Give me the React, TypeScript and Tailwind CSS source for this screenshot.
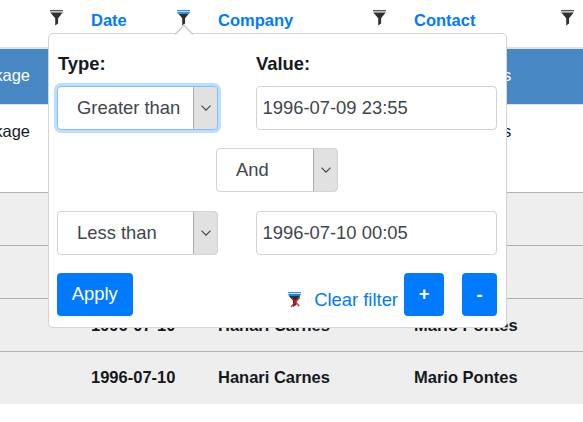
import React from "react";

function Funnel({ active = false }: { active?: boolean }) {
  return (
    <svg width="13" height="16" viewBox="0 0 13 16" className="block shrink-0">
      <rect x="0" y="0" width="13" height="1.4" fill={active ? "#2b8fe6" : "#555"} />
      <rect x="0" y="1.4" width="13" height="0.9" fill={active ? "#c4e4fb" : "#c8c8c8"} />
      <path d="M0.3 2.5H12.7L8.1 8.2V13.6L5.2 15.6V8.2Z" fill="#303030" />
      {active && <path d="M0 2.3H13L11.8 4H1.2Z" fill="#2b8fe6" />}
    </svg>
  );
}

function ClearFunnel() {
  return (
    <svg width="13" height="16" viewBox="0 0 13 16" className="block shrink-0">
      <path d="M0.8 4H12.2L8.4 8.6V12.8L5 15V8.6Z" fill="#303030" />
      <rect x="0" y="0" width="13" height="1.2" fill="#1c94f5" />
      <rect x="0" y="1.2" width="13" height="0.9" fill="#d6ecfc" />
      <path d="M0 2.1H13L12 4.1H1Z" fill="#1683df" />
      <path d="M3.6 6L11.2 14.2M11.6 5.4L3 15" stroke="#d42222" strokeWidth="1.7" strokeOpacity="0.85" />
    </svg>
  );
}

function HeaderCell({ label, width, active }: { label: string; width: string; active?: boolean }) {
  return (
    <div className={`${width} flex h-full shrink-0 justify-between pr-[7px] pl-[21px]`}>
      <span className="pt-[10px] leading-[20px] text-[#007bff]">{label}</span>
      <span className="pt-[10px]"><Funnel active={active} /></span>
    </div>
  );
}

function Row({ className, cells }: { className: string; cells: string[] }) {
  return (
    <div className={`flex leading-[20px] whitespace-nowrap ${className}`}>
      <div className="flex w-[70px] shrink-0 justify-end pr-10">{cells[0]}</div>
      <div className="w-[127px] shrink-0 pl-[21px]">{cells[1]}</div>
      <div className="w-[196px] shrink-0 pl-[21px]">{cells[2]}</div>
      <div className="w-[187px] shrink-0 pl-[21px]">{cells[3]}</div>
    </div>
  );
}

function Select({ label, className = "" }: { label: string; className?: string }) {
  return (
    <div className={`flex h-[44px] overflow-hidden rounded-[4px] border bg-white ${className}`}>
      <span className="flex-1 pl-[19px] leading-[42px] text-[#3f464c]">{label}</span>
      <span className="-my-px -mr-px flex w-[25px] items-center justify-center rounded-r-[4px] border border-[#adadad] bg-[#e1e1e1]">
        <svg width="10" height="6" viewBox="0 0 10 6" fill="none" stroke="#404040" strokeWidth="1.1">
          <path d="M0.5 0.6L5 5.1L9.5 0.6" />
        </svg>
      </span>
    </div>
  );
}

function Field({ value }: { value: string }) {
  return (
    <div className="h-[44px] w-[241px] rounded-[4px] border border-[#ced4da] pl-[5.5px] leading-[42px] text-[#3f464c]">
      {value}
    </div>
  );
}

function FilterPopup() {
  return (
    <div className="absolute top-[33px] left-[48px] h-[295px] w-[459px] rounded-[5px] border border-[#d5d5d5] bg-white px-2 text-[18.4px] whitespace-nowrap text-[#16191c]">
      <svg className="absolute -top-[10px] left-[125px]" width="20" height="11" viewBox="0 0 20 11">
        <path d="M1 11L10 1.2L19 11Z" fill="#fff" />
        <path d="M1 10.5L10 1.2L19 10.5" fill="none" stroke="#cfcfcf" strokeWidth="1.6" />
      </svg>
      <div className="flex pt-[16px] leading-[28px] font-bold">
        <div className="w-[199px] pl-px">Type:</div>
        <div>Value:</div>
      </div>
      <div className="mt-[8px] flex justify-between pr-px">
        <Select label="Greater than" className="w-[161px] border-[#80bdff] ring-[3px] ring-[#bfdeff]" />
        <Field value="1996-07-09 23:55" />
      </div>
      <div className="mt-[18px] pl-[159px]">
        <Select label="And" className="w-[122px] border-[#ced4da]" />
      </div>
      <div className="mt-[19px] flex justify-between pr-px">
        <Select label="Less than" className="w-[161px] border-[#ced4da]" />
        <Field value="1996-07-10 00:05" />
      </div>
      <div className="mt-[17.5px] flex h-[43px] pr-px">
        <button className="w-[75.5px] rounded-[4px] bg-[#007bff] text-white">Apply</button>
        <div className="ml-auto flex items-center pt-[11px] text-[#007bff]">
          <ClearFunnel />
          <span className="ml-[13px]">Clear filter</span>
        </div>
        <button className="ml-[6px] w-[40px] rounded-[4px] bg-[#007bff] font-bold text-white">+</button>
        <button className="ml-[18px] w-[35px] rounded-[4px] bg-[#007bff] pt-px font-bold text-white">-</button>
      </div>
    </div>
  );
}

export default function App() {
  return (
    <div className="relative h-[422px] w-[583px] overflow-hidden bg-white font-['Liberation_Sans',Arial,sans-serif] text-[16.5px] text-[#16191c]">
      <div className="flex h-[49px] border-b-2 border-[#dee2e6] font-bold">
        <HeaderCell label="" width="w-[70px]" />
        <HeaderCell label="Date" width="w-[127px]" active />
        <HeaderCell label="Company" width="w-[196px]" />
        <HeaderCell label="Contact" width="w-[188px]" />
      </div>
      <Row className="h-[55px] bg-[#4787c3] pt-[16px] text-white" cells={["Package", "", "", "Mario Pontes"]} />
      <Row className="h-[88px] border-t border-[#dee2e6] pt-[16px]" cells={["Package", "", "", "Mario Pontes"]} />
      <Row className="h-[53px] border-t border-[#b0b0b0] bg-[#eee]" cells={["", "", "", ""]} />
      <Row className="h-[53px] border-t border-[#b0b0b0] bg-[#eee]" cells={["", "", "", ""]} />
      <Row className="h-[53px] border-t border-[#b0b0b0] bg-[#eee] pt-[16px] font-bold" cells={["", "1996-07-10", "Hanari Carnes", "Mario Pontes"]} />
      <Row className="h-[53px] border-t border-[#b0b0b0] bg-[#eee] pt-[15px] font-bold" cells={["", "1996-07-10", "Hanari Carnes", "Mario Pontes"]} />
      <FilterPopup />
    </div>
  );
}
